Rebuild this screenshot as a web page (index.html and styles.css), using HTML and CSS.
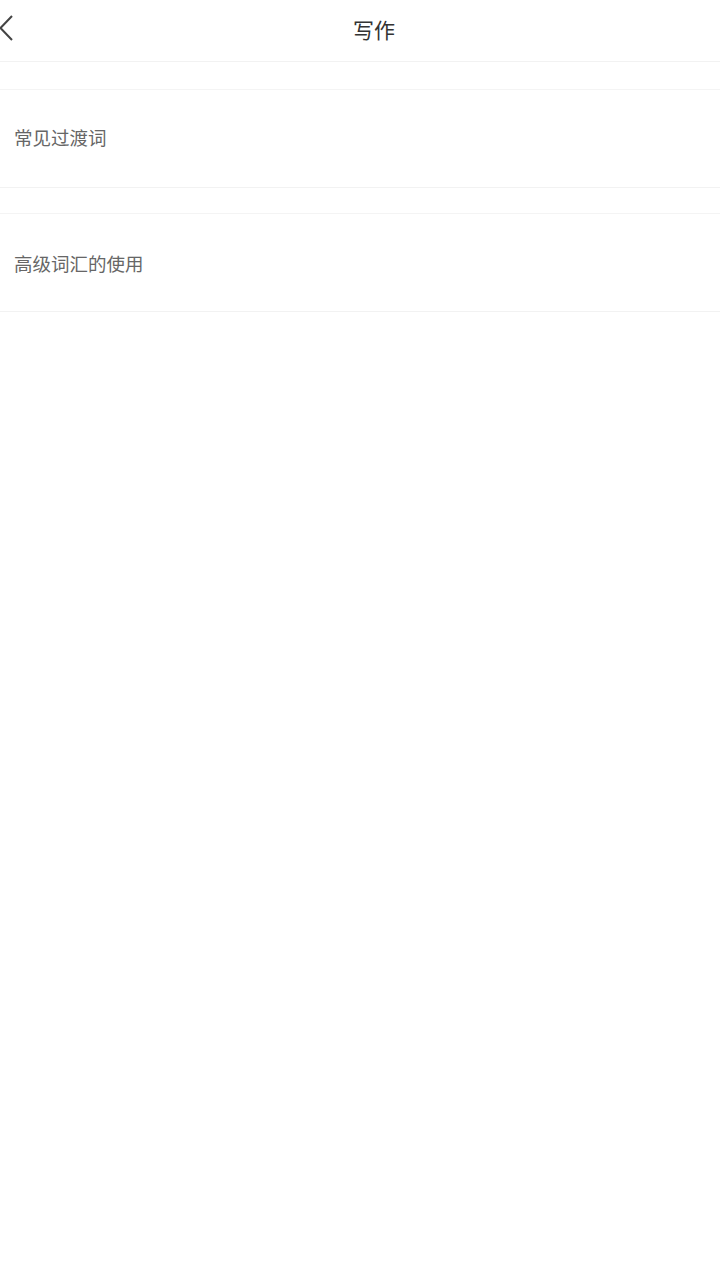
FILE: index.html
```html
<!DOCTYPE html>
<html lang="zh-CN">
<head>
    <meta charset="UTF-8">
    <meta name="viewport" content="width=device-width, initial-scale=1.0">
    <title>写作</title>
    <link rel="stylesheet" href="styles.css">
</head>
<body>
    <header class="topbar">
        <span class="back">
            <svg width="16" height="28" viewBox="0 0 16 28">
                <path d="M13 2 L1.5 14 L13 26" fill="none" stroke="#444" stroke-width="2"/>
            </svg>
        </span>
        <h1 class="title">写作</h1>
    </header>
    <section class="list">
        <div class="item first">常见过渡词</div>
        <div class="item second">高级词汇的使用</div>
    </section>
</body>
</html>
```

FILE: styles.css
```css
body {
    margin: 0;
    background: #fff;
    font-family: "Noto Sans CJK SC", "Noto Sans", sans-serif;
}
.topbar {
    height: 61px;
    border-bottom: 1px solid #f2f2f2;
    display: flex;
    align-items: center;
    justify-content: center;
    position: relative;
}
.back {
    position: absolute;
    left: -1px;
    top: 14px;
    display: flex;
}
.title {
    margin: 0 0 4px 28px;
    font-size: 21px;
    font-weight: normal;
    color: #333;
}
.list {
    display: flex;
    flex-direction: column;
}
.item {
    border-top: 1px solid #f4f4f4;
    border-bottom: 1px solid #f2f2f2;
    display: flex;
    align-items: center;
    padding: 0 0 3px 14px;
    height: 94px;
    font-size: 18.5px;
    color: #666;
}
.first {
    margin-top: 27px;
}
.second {
    margin-top: 25px;
    padding-bottom: 0;
    height: 97px;
}
```
